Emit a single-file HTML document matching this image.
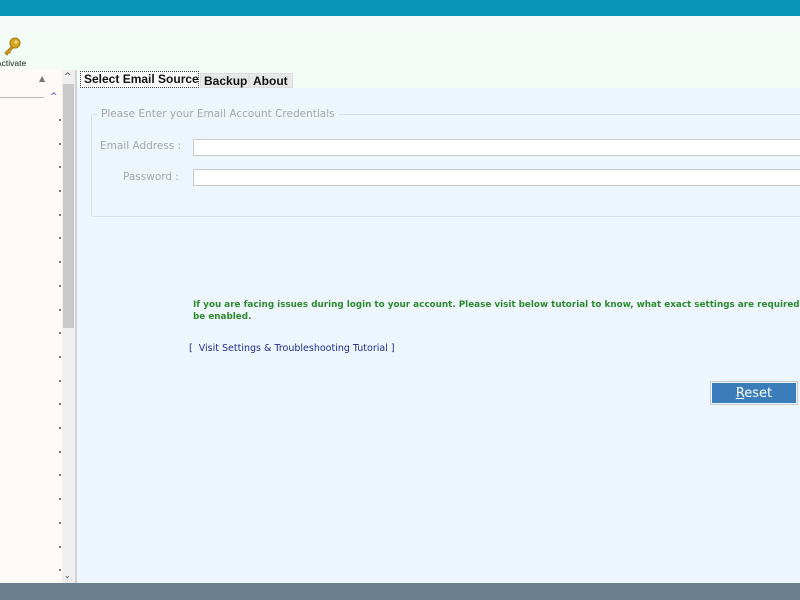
<!DOCTYPE html>
<html><head><style>
*{margin:0;padding:0;box-sizing:border-box}
body{width:800px;height:600px;overflow:hidden;position:relative;background:#f4fbf6;font-family:"DejaVu Sans","Liberation Sans",sans-serif;}
.a{position:absolute}
.t{font-family:"Liberation Sans",sans-serif;font-size:12px;font-weight:bold;white-space:nowrap;color:#111}
</style></head><body>
<div class="a" style="left:0;top:0;width:800px;height:16px;background:#0796b7"></div>
<div class="a" style="left:0;top:16px;width:800px;height:17px;background:#f7f9f9"></div>
<div class="a" style="left:0;top:33px;width:800px;height:37px;background:#f3fcf5"></div>
<svg class="a" style="left:2px;top:36px" width="20" height="20" viewBox="0 0 20 20"><circle cx="13" cy="7" r="5" fill="#d9a520" stroke="#a57812"/><circle cx="14" cy="6" r="1.5" fill="#f5e3a0"/><path d="M10 10 L3 17 L5 19 L6 17 L8 17 L8 15 L11 12" fill="#d9a520" stroke="#a57812"/></svg>
<div class="a" style="left:-4px;top:58px;font-size:8.5px;color:#222;font-family:'Liberation Sans',sans-serif">Activate</div>
<div class="a" style="left:0;top:70px;width:62px;height:513px;background:#fff9f8"></div>
<div class="a" style="left:0;top:97px;width:44px;height:1px;background:#bbb"></div>
<div class="a" style="left:39px;top:74px;font-size:8px;color:#777">▲</div>
<div class="a" style="left:50px;top:92px;font-size:9px;color:#2a4a9a">^</div>
<div class="a" style="left:62px;top:70px;width:13px;height:513px;background:#efefef"></div>
<div class="a" style="left:63px;top:84px;width:11px;height:244px;background:#c9c9c9"></div>
<div class="a" style="left:64px;top:72px;font-size:9px;color:#444">^</div>
<div class="a" style="left:64px;top:571px;font-size:8px;color:#444">⌄</div>
<div class="a" style="left:75px;top:70px;width:2px;height:513px;background:#d0d4d8"></div>
<div class="a" style="left:77px;top:70px;width:723px;height:513px;background:#eef6fd"></div>
<div class="a" style="left:77px;top:70px;width:723px;height:18px;background:#f3fcf5"></div>
<div class="a t" style="left:80px;top:71px;width:119px;height:17px;border:1px dotted #444;background:#fafafa;padding-left:3px;line-height:15px">Select Email Source</div>
<div class="a t" style="left:200px;top:73px;width:49px;height:15px;background:#e8e8e8;border:1px solid #ddd;padding-left:3px;line-height:14px">Backup</div>
<div class="a t" style="left:249px;top:73px;width:44px;height:15px;background:#e8e8e8;border:1px solid #ddd;padding-left:3px;line-height:14px">About</div>
<div class="a" style="left:91px;top:114px;width:709px;height:103px;border:1px solid #d8dfe6;border-right:none;border-radius:3px 0 0 3px"></div>
<div class="a" style="left:97px;top:108px;background:#eef6fd;padding:0 4px;font-size:10.5px;color:#a7a7a7;white-space:nowrap">Please Enter your Email Account Credentials</div>
<div class="a" style="left:100px;top:140px;font-size:10.5px;color:#a7a7a7">Email Address :</div>
<div class="a" style="left:123px;top:171px;font-size:10.5px;color:#a7a7a7">Password :</div>
<div class="a" style="left:193px;top:139px;width:607px;height:17px;background:#fff;border:1px solid #c8ccd0;border-right:none"></div>
<div class="a" style="left:193px;top:169px;width:607px;height:17px;background:#fff;border:1px solid #c8ccd0;border-right:none"></div>
<div class="a" style="left:193px;top:299px;width:607px;overflow:hidden;font-size:8.8px;font-weight:bold;color:#2e8a2e;white-space:nowrap;line-height:12px">If you are facing issues during login to your account. Please visit below tutorial to know, what exact settings are required<br>be enabled.</div>
<div class="a" style="left:189px;top:343px;font-size:9.5px;color:#1f2f8f;white-space:nowrap">[ &nbsp;Visit Settings &amp; Troubleshooting Tutorial ]</div>
<div class="a" style="left:710px;top:381px;width:88px;height:24px;border:1px solid #c4ccd4;padding:1px"><div style="width:100%;height:100%;background:#3b7cba;color:#fff;font-size:13px;text-align:center;line-height:21px"><u>R</u>eset</div></div>
<div class="a" style="left:0;top:583px;width:800px;height:17px;background:#6c7f91"></div>
<div id="d"></div>
<script>
var s='';for(var y=119;y<575;y+=23.7){s+='<div class="a" style="left:59px;top:'+Math.round(y)+'px;width:2px;height:2px;background:#777"></div>'}
document.getElementById('d').innerHTML=s;
</script>
</body></html>
